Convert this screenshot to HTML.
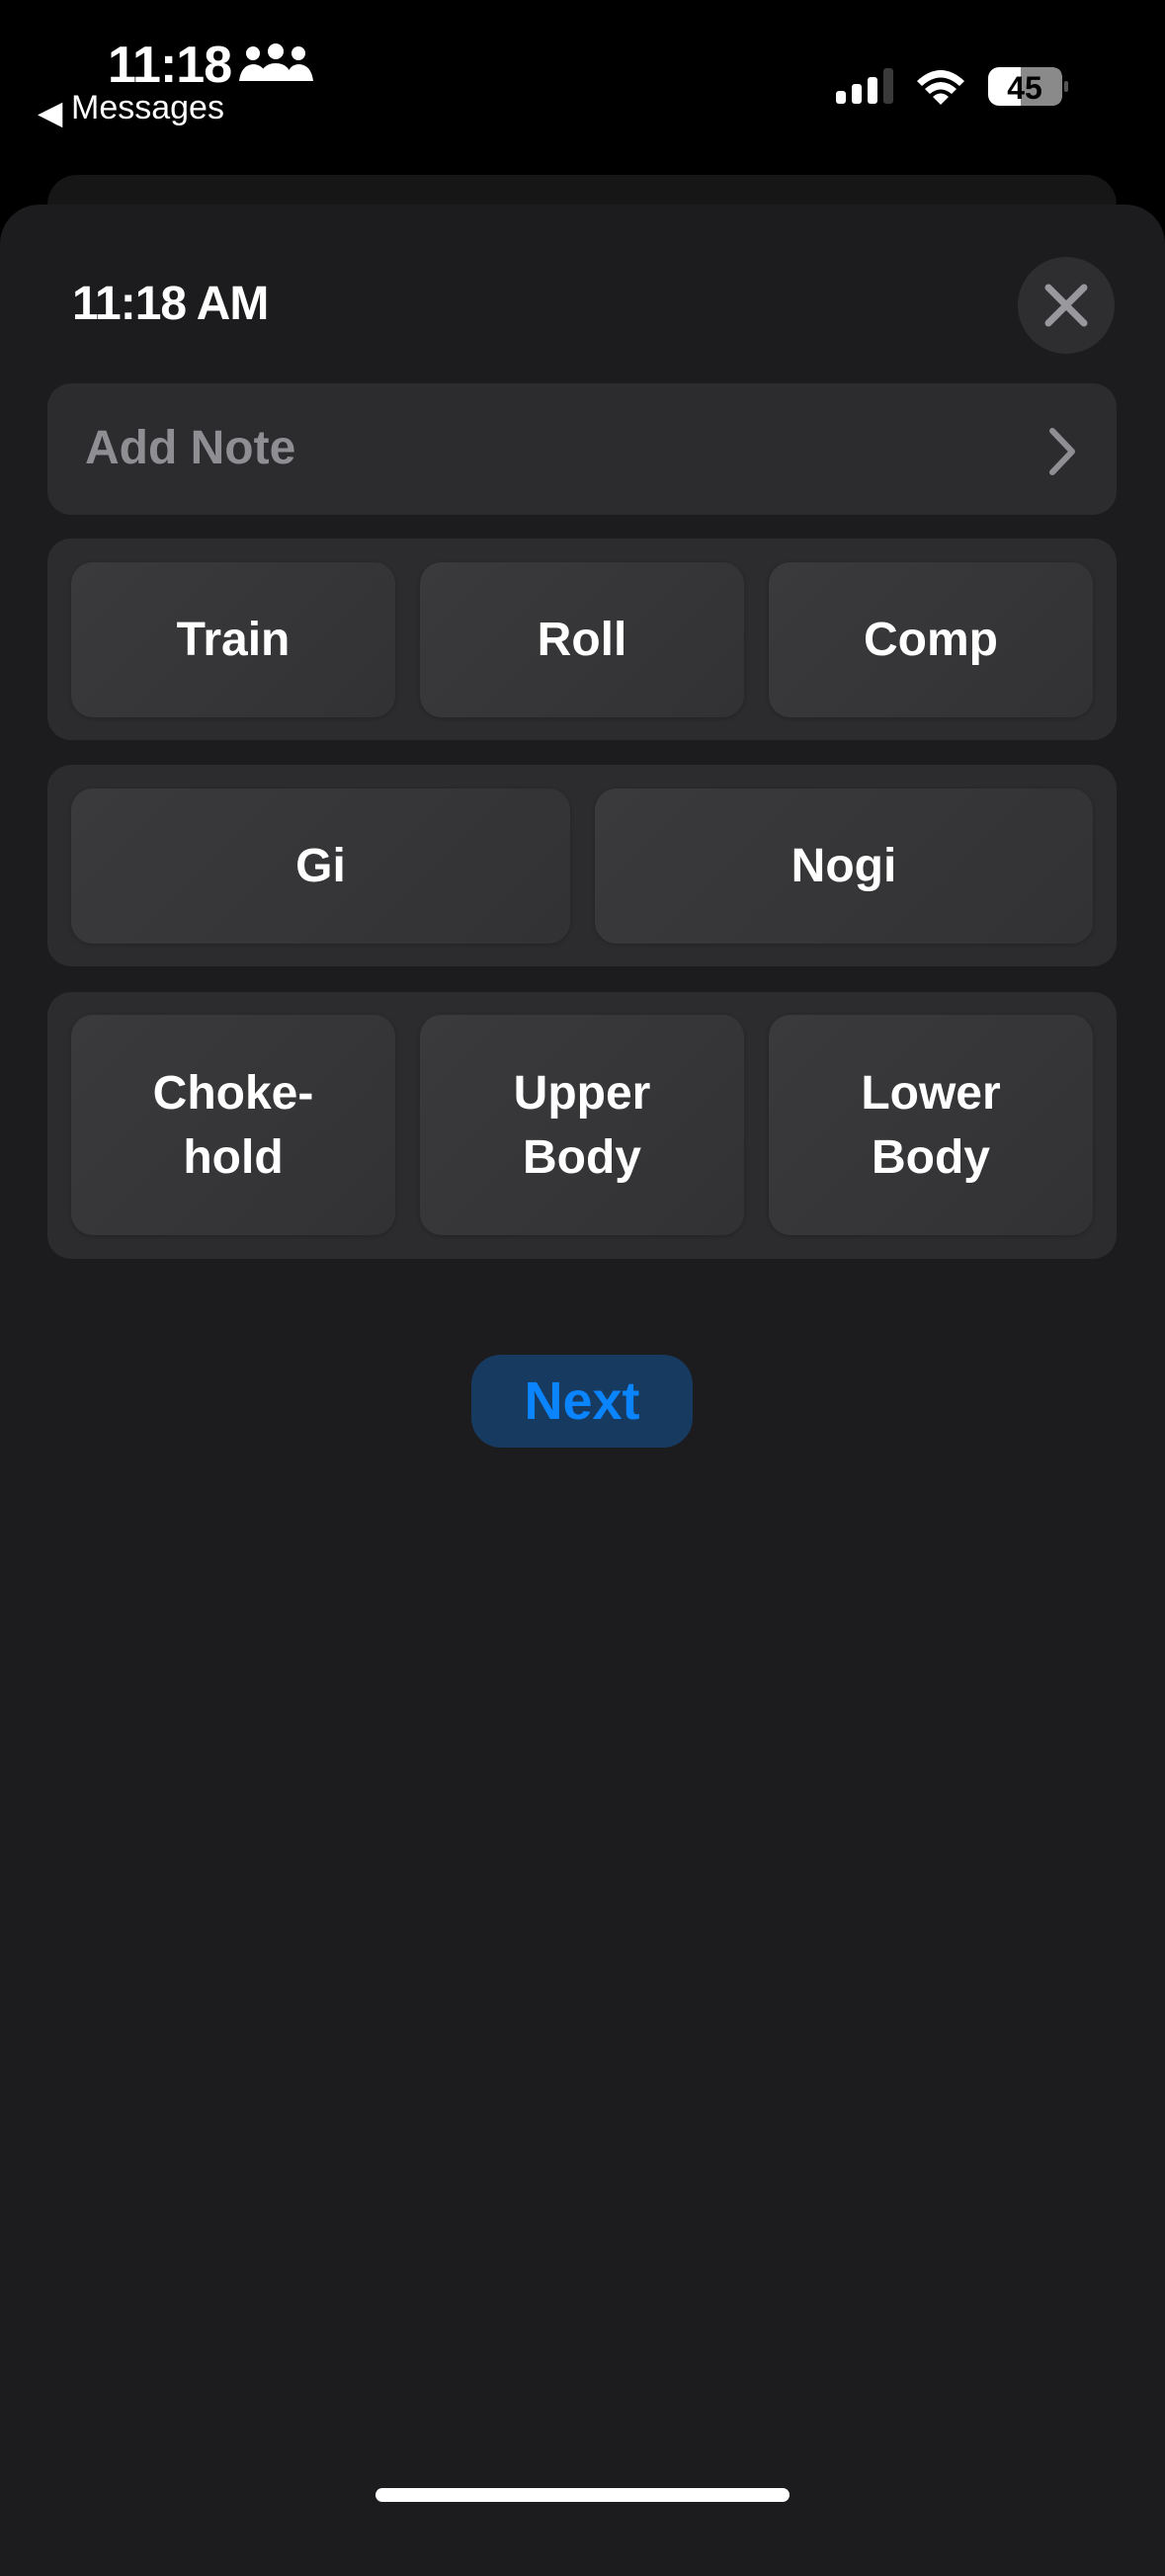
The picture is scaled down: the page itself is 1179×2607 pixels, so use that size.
<!DOCTYPE html>
<html><head><meta charset="utf-8">
<style>
*{margin:0;padding:0;box-sizing:border-box}
body{width:1179px;height:2556px;background:#000;position:relative;overflow:hidden;font-family:"Liberation Sans",sans-serif;color:#fff}
.abs{position:absolute}
.sheet{left:0;top:207px;width:1179px;height:2400px;background:#1c1c1e;border-radius:40px 40px 0 0}
.back{left:48px;top:177px;width:1082px;height:80px;background:#161617;border-radius:30px}
.group{position:absolute;left:48px;width:1082px;background:#2c2c2e;border-radius:24px}
.btn{position:absolute;background:linear-gradient(135deg,#3a3a3c,#323234);border-radius:22px;display:flex;align-items:center;justify-content:center;text-align:center;font-size:48px;font-weight:bold;line-height:65px;box-shadow:0 1px 4px rgba(0,0,0,.25)}
</style></head><body>
<div class="abs" style="left:109px;top:36px;font-size:52px;font-weight:bold;letter-spacing:-1px">11:18</div>
<svg class="abs" style="left:242px;top:44px" width="75" height="42" viewBox="0 0 75 42">
<circle cx="14" cy="10" r="7" fill="#fff"/><circle cx="37" cy="8" r="8" fill="#fff"/><circle cx="60" cy="10" r="7" fill="#fff"/>
<path d="M0 38 Q2 22 14 21 Q22 21 26 28 L24 38Z M50 28 Q53 21 61 21 Q73 22 75 38 L51 38Z M20 38 Q22 20 37 20 Q52 20 54 38Z" fill="#fff"/></svg>
<div class="abs" style="left:38px;top:94px;font-size:33px">&#9664;&#xFE0E;</div>
<div class="abs" style="left:72px;top:90px;font-size:34px">Messages</div>
<svg class="abs" style="left:840px;top:60px" width="250" height="50">
<rect x="6" y="32" width="10" height="13" rx="3" fill="#fff"/>
<rect x="22" y="25" width="10" height="20" rx="3" fill="#fff"/>
<rect x="38" y="18" width="10" height="27" rx="3" fill="#fff"/>
<rect x="54" y="9" width="10" height="36" rx="3" fill="#3a3a3a"/>
<path d="M88 22 Q112 0 136 22 L131 27 Q112 10 93 27Z M96 30 Q112 16 128 30 L123 35 Q112 26 101 35Z M104 38 Q112 31 120 38 L112 46Z" fill="#fff"/>
<rect x="160" y="8" width="75" height="39" rx="11" fill="#fff"/>
<path d="M193 8 H224 Q235 8 235 19 V36 Q235 47 224 47 H193Z" fill="#8a8a8a"/>
<rect x="237" y="22" width="4" height="11" rx="2" fill="#555"/>
<text x="197" y="40" font-size="32" font-weight="bold" text-anchor="middle" font-family="Liberation Sans" fill="#000">45</text>
</svg>
<div class="abs back"></div>
<div class="abs sheet"></div>
<div class="abs" style="left:73px;top:280px;font-size:48px;font-weight:bold;letter-spacing:-1px">11:18 AM</div>
<div class="abs" style="left:1030px;top:260px;width:98px;height:98px;border-radius:50%;background:#2e2e30"></div>
<svg class="abs" style="left:1030px;top:260px" width="98" height="98"><path d="M31 31 L67 67 M67 31 L31 67" stroke="#98989d" stroke-width="7" stroke-linecap="round"/></svg>
<div class="group" style="top:388px;height:133px"></div>
<div class="abs" style="left:86px;top:426px;font-size:48px;font-weight:bold;color:#8e8e93">Add Note</div>
<svg class="abs" style="left:1055px;top:430px" width="40" height="54"><path d="M10 6 L30 27 L10 48" stroke="#8e8e93" stroke-width="6" fill="none" stroke-linecap="round" stroke-linejoin="round"/></svg>
<div class="group" style="top:545px;height:204px"></div>
<div class="btn" style="left:72px;top:569px;width:328px;height:157px">Train</div>
<div class="btn" style="left:425px;top:569px;width:328px;height:157px">Roll</div>
<div class="btn" style="left:778px;top:569px;width:328px;height:157px">Comp</div>
<div class="group" style="top:774px;height:204px"></div>
<div class="btn" style="left:72px;top:798px;width:505px;height:157px">Gi</div>
<div class="btn" style="left:602px;top:798px;width:504px;height:157px">Nogi</div>
<div class="group" style="top:1004px;height:270px"></div>
<div class="btn" style="left:72px;top:1027px;width:328px;height:223px">Choke-<br>hold</div>
<div class="btn" style="left:425px;top:1027px;width:328px;height:223px">Upper<br>Body</div>
<div class="btn" style="left:778px;top:1027px;width:328px;height:223px">Lower<br>Body</div>
<div class="abs" style="left:477px;top:1371px;width:224px;height:94px;border-radius:30px;background:#173a60;color:#0a84ff;font-size:54px;font-weight:bold;display:flex;align-items:center;justify-content:center">Next</div>
<div class="abs" style="left:380px;top:2518px;width:419px;height:14px;border-radius:7px;background:#fff"></div>
</body></html>
